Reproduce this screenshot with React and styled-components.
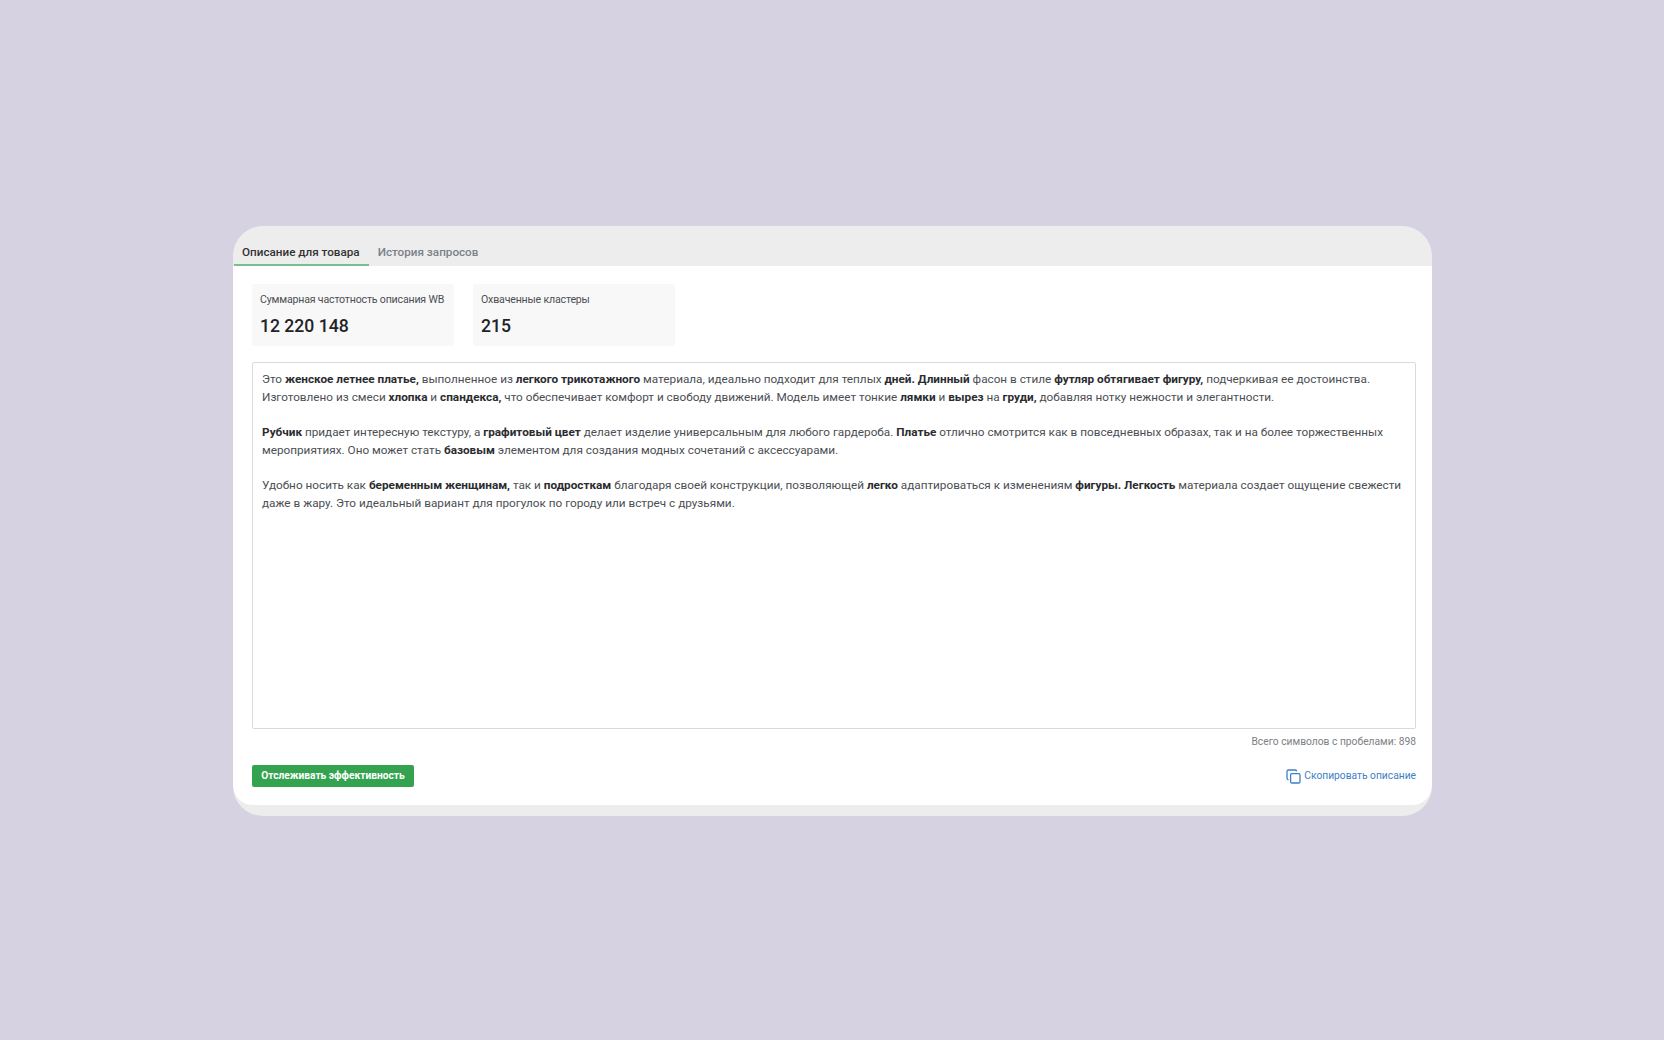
import React from "react";
import styled, { createGlobalStyle } from "styled-components";

const Global = createGlobalStyle`
  html, body { margin: 0; padding: 0; background: #d6d2e1; }
  body { font-family: Roboto, "Liberation Sans", sans-serif; }
`;
const Page = styled.div`
  width: 1664px; height: 1040px; box-sizing: border-box; padding: 226px 232px 0 233px; overflow: hidden;
`;
const Card = styled.div`
  width: 1199px; height: 590px; border-radius: 30px; background: #ededee; overflow: hidden;
  display: flex; flex-direction: column;
`;
const Tabs = styled.div`
  height: 40px; display: flex; flex: none; padding-left: 1px;
`;
const Tab = styled.div`
  box-sizing: border-box; height: 40px; padding: 19px 9px 0 8px; margin-right: 1px;
  font-size: 11.7px; line-height: 14px; font-weight: 500; white-space: nowrap;
  color: ${p => p.$active ? "#333" : "#7c8087"};
  border-bottom: 2px solid ${p => p.$active ? "#74c08f" : "transparent"};
`;
const Body = styled.div`
  background: #fff; height: 539px; flex: none; box-sizing: border-box; padding: 18px 16px 0 19px;
  display: flex; flex-direction: column; border-radius: 0 0 20px 20px;
`;
const Stats = styled.div`
  display: flex; gap: 19px; height: 62px; flex: none;
`;
const Stat = styled.div`
  width: 202px; box-sizing: border-box; padding: 9px 8px 0; background: #f8f8f8; border-radius: 3px;
`;
const StatLabel = styled.div`
  font-size: 10.6px; line-height: 14px; color: #4c4f54; letter-spacing: -0.18px; white-space: nowrap;
`;
const StatValue = styled.div`
  margin-top: 9px; font-size: 17.6px; line-height: 20px; font-weight: 500; color: #212327;
`;
const Editor = styled.div`
  margin-top: 16px; height: 367px; flex: none; box-sizing: border-box; border: 1px solid #d8d9db; border-radius: 2px;
  padding: 8px 9px; font-size: 11.75px; line-height: 17.65px; color: #4b4e53;
  b { font-weight: 700; color: #2a2c30; }
  p { margin: 0 0 17.65px; }
`;
const Count = styled.div`
  margin-top: 6px; text-align: right; font-size: 10.27px; line-height: 13px; color: #7d8085;
`;
const Footer = styled.div`
  margin-top: 17px; display: flex; justify-content: space-between; align-items: center;
`;
const TrackButton = styled.button`
  width: 162px; height: 22px; padding: 0; border: 0; border-radius: 2px; background: #33a350; color: #fff;
  font: 700 10.2px/22px Roboto, sans-serif; text-align: center;
`;
const CopyLink = styled.a`
  display: flex; align-items: center; gap: 3px; font-size: 10.25px; line-height: 14px; color: #3d7fc6;
`;

const Copy = () => (
  <svg width="15" height="15" viewBox="0 0 15 15" fill="none" stroke="#3d7fc6" strokeWidth="1.3">
    <rect x="4.6" y="4.6" width="9.4" height="9.4" rx="1.3" />
    <path d="M2.6 10.6 A1.5 1.5 0 0 1 1 9.2 V2.6 A1.5 1.5 0 0 1 2.6 1 H9.2 A1.5 1.5 0 0 1 10.6 2.4" />
  </svg>
);

export default function App() {
  return (
    <Page>
      <Global />
      <Card>
        <Tabs>
          <Tab $active>Описание для товара</Tab>
          <Tab>История запросов</Tab>
        </Tabs>
        <Body>
          <Stats>
            <Stat>
              <StatLabel>Суммарная частотность описания WB</StatLabel>
              <StatValue>12 220 148</StatValue>
            </Stat>
            <Stat>
              <StatLabel>Охваченные кластеры</StatLabel>
              <StatValue>215</StatValue>
            </Stat>
          </Stats>
          <Editor>
            <p>Это <b>женское летнее платье,</b> выполненное из <b>легкого трикотажного</b> материала, идеально подходит для теплых <b>дней. Длинный</b> фасон в стиле <b>футляр обтягивает фигуру,</b> подчеркивая ее достоинства. Изготовлено из смеси <b>хлопка</b> и <b>спандекса,</b> что обеспечивает комфорт и свободу движений. Модель имеет тонкие <b>лямки</b> и <b>вырез</b> на <b>груди,</b> добавляя нотку нежности и элегантности.</p>
            <p><b>Рубчик</b> придает интересную текстуру, а <b>графитовый цвет</b> делает изделие универсальным для любого гардероба. <b>Платье</b> отлично смотрится как в повседневных образах, так и на более торжественных мероприятиях. Оно может стать <b>базовым</b> элементом для создания модных сочетаний с аксессуарами.</p>
            <p>Удобно носить как <b>беременным женщинам,</b> так и <b>подросткам</b> благодаря своей конструкции, позволяющей <b>легко</b> адаптироваться к изменениям <b>фигуры. Легкость</b> материала создает ощущение свежести даже в жару. Это идеальный вариант для прогулок по городу или встреч с друзьями.</p>
          </Editor>
          <Count>Всего символов с пробелами: 898</Count>
          <Footer>
            <TrackButton>Отслеживать эффективность</TrackButton>
            <CopyLink><Copy />Скопировать описание</CopyLink>
          </Footer>
        </Body>
      </Card>
    </Page>
  );
}
